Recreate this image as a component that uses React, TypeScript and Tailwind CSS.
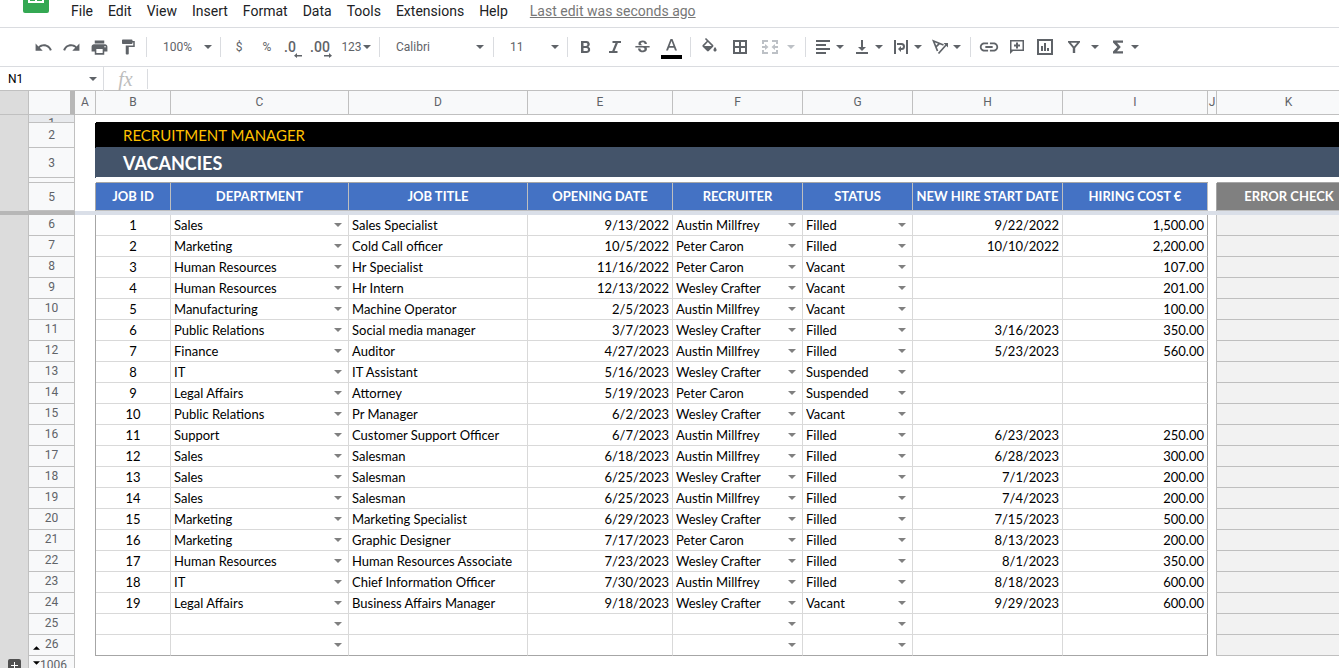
import type { ReactNode } from "react";
import { MdFormatPaint, MdLink, MdPrint, MdRedo, MdStrikethroughS, MdUndo } from "react-icons/md";

const menus = ["File", "Edit", "View", "Insert", "Format", "Data", "Tools", "Extensions", "Help"];

const departments = ["", "Sales", "Marketing", "Human Resources", "Manufacturing", "Public Relations", "Finance", "IT", "Legal Affairs", "Support"];
const recruiters = ["", "Austin Millfrey", "Peter Caron", "Wesley Crafter"];
const statuses = ["", "Filled", "Vacant", "Suspended"];

const vacancies = [
  ["1", "Sales", "Sales Specialist", "9/13/2022", "Austin Millfrey", "Filled", "9/22/2022", "1,500.00"],
  ["2", "Marketing", "Cold Call officer", "10/5/2022", "Peter Caron", "Filled", "10/10/2022", "2,200.00"],
  ["3", "Human Resources", "Hr Specialist", "11/16/2022", "Peter Caron", "Vacant", "", "107.00"],
  ["4", "Human Resources", "Hr Intern", "12/13/2022", "Wesley Crafter", "Vacant", "", "201.00"],
  ["5", "Manufacturing", "Machine Operator", "2/5/2023", "Austin Millfrey", "Vacant", "", "100.00"],
  ["6", "Public Relations", "Social media manager", "3/7/2023", "Wesley Crafter", "Filled", "3/16/2023", "350.00"],
  ["7", "Finance", "Auditor", "4/27/2023", "Austin Millfrey", "Filled", "5/23/2023", "560.00"],
  ["8", "IT", "IT Assistant", "5/16/2023", "Wesley Crafter", "Suspended", "", ""],
  ["9", "Legal Affairs", "Attorney", "5/19/2023", "Peter Caron", "Suspended", "", ""],
  ["10", "Public Relations", "Pr Manager", "6/2/2023", "Wesley Crafter", "Vacant", "", ""],
  ["11", "Support", "Customer Support Officer", "6/7/2023", "Austin Millfrey", "Filled", "6/23/2023", "250.00"],
  ["12", "Sales", "Salesman", "6/18/2023", "Austin Millfrey", "Filled", "6/28/2023", "300.00"],
  ["13", "Sales", "Salesman", "6/25/2023", "Wesley Crafter", "Filled", "7/1/2023", "200.00"],
  ["14", "Sales", "Salesman", "6/25/2023", "Austin Millfrey", "Filled", "7/4/2023", "200.00"],
  ["15", "Marketing", "Marketing Specialist", "6/29/2023", "Wesley Crafter", "Filled", "7/15/2023", "500.00"],
  ["16", "Marketing", "Graphic Designer", "7/17/2023", "Peter Caron", "Filled", "8/13/2023", "200.00"],
  ["17", "Human Resources", "Human Resources Associate", "7/23/2023", "Wesley Crafter", "Filled", "8/1/2023", "350.00"],
  ["18", "IT", "Chief Information Officer", "7/30/2023", "Austin Millfrey", "Filled", "8/18/2023", "600.00"],
  ["19", "Legal Affairs", "Business Affairs Manager", "9/18/2023", "Wesley Crafter", "Vacant", "9/29/2023", "600.00"],
  ["", "", "", "", "", "", "", ""],
  ["", "", "", "", "", "", "", ""],
];

const headings = ["JOB ID", "DEPARTMENT", "JOB TITLE", "OPENING DATE", "RECRUITER", "STATUS", "NEW HIRE START DATE", "HIRING COST €"];

function Caret({ className = "text-[#5f6368]" }: { className?: string }) {
  return (
    <svg viewBox="0 0 8 4" className={`w-2 h-1 shrink-0 ${className}`} fill="currentColor" aria-hidden="true">
      <path d="M0 0h8L4 4z" />
    </svg>
  );
}

function Icon({ children }: { children: ReactNode }) {
  return (
    <svg viewBox="0 0 18 18" className="size-[18px] shrink-0" fill="currentColor" aria-hidden="true">
      {children}
    </svg>
  );
}

function Tool({ label, className, children }: { label: string; className: string; children: ReactNode }) {
  return (
    <button type="button" aria-label={label} className={`h-6 flex items-center justify-center shrink-0 ${className}`}>
      {children}
    </button>
  );
}

function Divider() {
  return <div className="w-px h-5 bg-[#dadce0] shrink-0"></div>;
}

function Toolbar() {
  return (
    <div className="h-[39px] flex items-center pl-[29px] border-b border-[#dadce0] text-[#5f6368] text-xs overflow-hidden">
      <Tool label="Undo" className="w-7"><MdUndo size={19} /></Tool>
      <Tool label="Redo" className="w-7"><MdRedo size={19} /></Tool>
      <Tool label="Print" className="w-7"><MdPrint size={19} /></Tool>
      <Tool label="Paint format" className="w-[33px] pr-1"><MdFormatPaint size={18} /></Tool>
      <Divider />
      <Tool label="Zoom" className="w-[73px] gap-3 pl-2">100% <Caret /></Tool>
      <Divider />
      <Tool label="Format as currency" className="w-9">$</Tool>
      <Tool label="Format as percent" className="w-5">%</Tool>
      <Tool label="Decrease decimal places" className="w-8">
        <span className="text-sm font-medium">.0</span>
        <svg viewBox="0 0 8 5" className="w-2 h-[5px] -ml-0.5 mt-4" fill="currentColor"><path d="M3 0v2h5v1.500H3V5L0 2.700z" /></svg>
      </Tool>
      <Tool label="Increase decimal places" className="w-7 pr-1">
        <span className="text-sm font-medium">.00</span>
        <svg viewBox="0 0 8 5" className="w-2 h-[5px] -ml-1.5 mt-4" fill="currentColor"><path d="M5 0v2H0v1.500h5V5l3-2.300z" /></svg>
      </Tool>
      <Tool label="More formats" className="w-[42px] gap-px pr-1">123<Caret /></Tool>
      <Divider />
      <Tool label="Font" className="w-[113px] pl-4 pr-[9px]"><span className="flex-1 text-left">Calibri</span><Caret /></Tool>
      <Divider />
      <Tool label="Font size" className="w-[73px] pl-4 pr-2"><span className="flex-1 text-left">11</span><Caret /></Tool>
      <Divider />
      <Tool label="Bold" className="w-[35px]">
        <Icon><path fillRule="evenodd" d="M4 3h5.500a3.200 3.200 0 0 1 2 5.800A3.300 3.300 0 0 1 10 15H4zM6.500 5v2.900H9a1.450 1.450 0 0 0 0-2.900zM6.500 10v3h3a1.500 1.500 0 0 0 0-3z" /></Icon>
      </Tool>
      <Tool label="Italic" className="w-[23px]"><Icon><path d="M6.500 3H15v2h-3.100L8.600 13H11.500v2H3v-2h3.200L9.500 5h-3z" /></Icon></Tool>
      <Tool label="Strikethrough" className="w-[33px]"><MdStrikethroughS size={19} /></Tool>
      <Tool label="Text color" className="w-[25px]">
        <svg viewBox="0 0 21 20" className="w-[21px] h-5 mt-1"><path fill="#5f6368" fillRule="evenodd" d="M9.500 0h2l4.500 11.500h-2l-1-2.800H8l-1 2.800H5zM8.600 7h3.800l-1.900-5z" /><path fill="#000" d="M0 16h21v4H0z" /></svg>
      </Tool>
      <div className="w-1.5 shrink-0"></div>
      <Divider />
      <Tool label="Fill color" className="w-[37px]">
        <svg viewBox="0 0 24 24" className="size-[19px]" fill="currentColor"><path d="M16.560 8.940L7.620 0 6.210 1.410l2.380 2.380-5.150 5.150c-.59.59-.59 1.540 0 2.120l5.500 5.500c.29.29.68.44 1.060.44s.77-.15 1.060-.44l5.500-5.500c.59-.58.59-1.530 0-2.120zM5.210 10L10 5.210 14.790 10H5.210zM19 11.500s-2 2.170-2 3.500c0 1.100.9 2 2 2s2-.9 2-2c0-1.330-2-3.500-2-3.500z" /></svg>
      </Tool>
      <Tool label="Borders" className="w-6"><Icon><path fillRule="evenodd" d="M2 2h14v14H2zM4 4v4h4V4zM10 4v4h4V4zM4 10v4h4v-4zM10 10v4h4v-4z" /></Icon></Tool>
      <Tool label="Merge cells" className="w-[53px] gap-2 pr-0.5 text-[#bdc1c6]">
        <Icon><path d="M1 2h6v2H3v2H1zM11 2h6v4h-2V4h-4zM1 12h2v2h4v2H1zM15 12h2v4h-6v-2h4zM1 8h3V6l3.500 3L4 12v-2H1zM17 8h-3V6l-3.500 3 3.500 3v-2h3z" /></Icon>
        <Caret className="text-[#bdc1c6]" />
      </Tool>
      <Divider />
      <div className="flex px-[3px] shrink-0">
        <Tool label="Horizontal align" className="w-[39px] gap-1"><Icon><path d="M2 2h14v2H2zM2 6h10v2H2zM2 10h14v2H2zM2 14h10v2H2z" /></Icon><Caret /></Tool>
        <Tool label="Vertical align" className="w-[39px] gap-1"><Icon><path d="M8 2h2v7h3l-4 4-4-4h3zM3 14h12v2H3z" /></Icon><Caret /></Tool>
        <Tool label="Text wrapping" className="w-[39px] gap-1"><Icon><path d="M2 2h2v14H2zM14 2h2v14h-2zM5 5h4.500a3.500 3.500 0 0 1 0 7H9v2l-3-3 3-3v2h.5a1.500 1.500 0 0 0 0-3H5z" /></Icon><Caret /></Tool>
        <Tool label="Text rotation" className="w-[39px] gap-1">
          <Icon>
            <path fill="none" stroke="currentColor" strokeWidth="1.700" d="M6.500 13L2.500 3l10 4M4.700 9.200L8.600 5.300M7.500 15.500L15.500 6.500" />
            <path d="M12.500 5H17v4.500z" />
          </Icon>
          <Caret />
        </Tool>
      </div>
      <div className="w-0.5 shrink-0"></div>
      <Divider />
      <Tool label="Insert link" className="w-[35px]"><MdLink size={22} /></Tool>
      <Tool label="Insert comment" className="w-[21px]"><Icon><path fillRule="evenodd" d="M2 2h14v11H5l-3 3zM3.500 3.500v8h11v-8zM8 4.500h2v2h2v2h-2v2H8v-2H6v-2h2z" /></Icon></Tool>
      <Tool label="Insert chart" className="w-[35px]"><Icon><path fillRule="evenodd" d="M1 1h16v16H1zM3 3v12h12V3zM5 8h2v5H5zM8 5h2v8H8zM11 10h2v3h-2z" /></Icon></Tool>
      <Tool label="Filter" className="w-[42px] gap-2 pr-0.5"><Icon><path fillRule="evenodd" d="M3 3h12v1.200L10.200 10v5H7.800v-5L3 4.200zM5.800 4.700L9 8.600l3.200-3.900z" /></Icon><Caret /></Tool>
      <Tool label="Functions" className="w-[39px] gap-1"><Icon><path d="M4 2.500h10v2.300H8l3.800 4.200L8 13.200h6v2.300H4v-2L8.300 9 4 4.500z" /></Icon><Caret /></Tool>
    </div>
  );
}

function CellSelect({ value, options, label }: { value: string; options: string[]; label: string }) {
  return (
    <div className="flex items-center pl-[3px] pr-1.5 h-5">
      <select aria-label={label} defaultValue={value} className="appearance-none flex-1 min-w-0 h-5 p-0 bg-transparent">
        {options.map((item) => (
          <option key={item} value={item}>{item}</option>
        ))}
      </select>
      <Caret className="text-[#808080]" />
    </div>
  );
}

function RowHead({ n }: { n: string }) {
  return (
    <>
      <td className="p-0 bg-[#dcdcdc] border-r border-[#c0c0c0]"></td>
      <th scope="row" className="p-0 bg-[#f8f9fa] border-r border-b border-[#c0c0c0] font-normal font-[Roboto,sans-serif] text-xs text-[#5f6368]">{n}</th>
    </>
  );
}

function Sheet() {
  return (
    <div className="overflow-hidden">
      <table className="table-fixed border-separate border-spacing-0 w-[1361px] font-[Lato,sans-serif] text-[13px] leading-5 text-black">
        <colgroup>
          <col className="w-[29px]" />
          <col className="w-[46px]" />
          <col className="w-[21px]" />
          <col className="w-[75px]" />
          <col className="w-[178px]" />
          <col className="w-[179px]" />
          <col className="w-[145px]" />
          <col className="w-[130px]" />
          <col className="w-[110px]" />
          <col className="w-[150px]" />
          <col className="w-[145px]" />
          <col className="w-[9px]" />
          <col className="w-[144px]" />
        </colgroup>
        <thead>
          <tr className="h-6 font-[Roboto,sans-serif] text-xs text-[#5f6368]">
            <td className="p-0 bg-[#dcdcdc] border-r border-b border-[#c0c0c0]"></td>
            <td className="p-0 bg-[#f8f9fa] border-r-[5px] border-b border-r-[#b7b7b7] border-b-[#c0c0c0]"></td>
            {"ABCDEFGHIJK".split("").map((c) => (
              <th key={c} scope="col" className="p-0 pb-0.5 bg-[#f8f9fa] border-r border-b border-[#c0c0c0] font-normal">{c}</th>
            ))}
          </tr>
        </thead>
        <tbody>
          <tr className="h-2">
            <td className="p-0 bg-[#dcdcdc] border-r border-[#c0c0c0]"></td>
            <th scope="row" className="p-0 bg-[#e8eaed] border-r border-b border-[#c0c0c0] font-normal font-[Roboto,sans-serif] text-xs text-[#5f6368]">
              <div className="h-[7px] overflow-hidden leading-4">1</div>
            </th>
            <td className="p-0"></td>
            <td colSpan={10} className="p-0 border-b border-black"></td>
          </tr>
          <tr className="h-[25px]">
            <RowHead n="2" />
            <td className="p-0 border-r border-black"></td>
            <td colSpan={10} className="p-0 pl-[27px] bg-black border-b border-[#44546a] text-[#ffc000] text-[15px] leading-6">RECRUITMENT MANAGER</td>
          </tr>
          <tr className="h-[30px]">
            <RowHead n="3" />
            <td className="p-0 border-r border-[#44546a]"></td>
            <td colSpan={10} className="p-0 pl-[27px] bg-[#44546a] border-b border-white text-white text-lg font-bold">VACANCIES</td>
          </tr>
          <tr className="h-[5px]">
            <RowHead n="" />
            <td className="p-0"></td>
            <td colSpan={8} className="p-0 border-b border-[#a6a6a6]"></td>
            <td className="p-0"></td>
            <td className="p-0 border-b border-[#a6a6a6]"></td>
          </tr>
          <tr className="h-7 text-white whitespace-nowrap">
            <RowHead n="5" />
            <td className="p-0 border-r border-[#a6a6a6]"></td>
            {headings.map((item) => (
              <th key={item} className="p-0 pb-0.5 bg-[#4472c4] border-r border-b border-[#bfbfbf] font-bold">{item}</th>
            ))}
            <td className="p-0 border-r border-[#a6a6a6]"></td>
            <th className="p-0 pb-0.5 bg-[#808080] border-b border-[#bfbfbf] font-bold">ERROR CHECK</th>
          </tr>
          <tr className="h-1">
            <td colSpan={2} className="p-0 bg-[#b7b7b7]"></td>
            <td colSpan={11} className="p-0 bg-[#dadfe8]"></td>
          </tr>
          {vacancies.map(([id, department, title, opening, recruiter, status, start, cost], i) => {
            const row = String(i + 6);
            const line = i === vacancies.length - 1 ? "border-b-[#a6a6a6]" : "border-b-[#d9d9d9]";
            const cell = `p-0 border-r border-b border-r-[#d9d9d9] ${line}`;
            return (
              <tr key={row} className="h-[21px] whitespace-nowrap">
                <td className="p-0 bg-[#dcdcdc] border-r border-[#c0c0c0]"></td>
                <th scope="row" className="p-0 pb-0.5 bg-[#f8f9fa] border-r border-b border-[#c0c0c0] font-normal font-[Roboto,sans-serif] text-xs leading-4 text-[#5f6368]">
                  {row === "26" ? (
                    <div className="flex items-center gap-[5px] pl-1">
                      <svg viewBox="0 0 8 4" className="w-[7px] h-1 mt-2" aria-hidden="true"><path d="M0 4h8L4 0z" /></svg>
                      {row}
                    </div>
                  ) : row}
                </th>
                <td className="p-0 border-r border-[#a6a6a6]"></td>
                <td className={`${cell} text-center`}>{id}</td>
                <td className={cell}><CellSelect label={`Department, row ${row}`} value={department} options={departments} /></td>
                <td className={`${cell} pl-[3px]`}>{title}</td>
                <td className={`${cell} pr-[3px] text-right`}>{opening}</td>
                <td className={cell}><CellSelect label={`Recruiter, row ${row}`} value={recruiter} options={recruiters} /></td>
                <td className={cell}><CellSelect label={`Status, row ${row}`} value={status} options={statuses} /></td>
                <td className={`${cell} pr-[3px] text-right`}>{start}</td>
                <td className={`p-0 pr-[3px] border-r border-b border-r-[#a6a6a6] text-right ${line}`}>{cost}</td>
                <td className="p-0 border-r border-[#bfbfbf]"></td>
                <td className="p-0 bg-[#f2f2f2] border-b border-[#bfbfbf]"></td>
              </tr>
            );
          })}
          <tr className="h-[21px]">
            <td className="p-0 bg-[#dcdcdc] border-r border-[#c0c0c0] align-top">
              <button type="button" aria-label="Expand group" className="flex items-center justify-center size-[13px] ml-2 mt-[3px] rounded-xs bg-[#505050]">
                <svg viewBox="0 0 7 7" className="size-[7px]" fill="#fff"><path d="M3 0h1v3h3v1H4v3H3V4H0V3h3z" /></svg>
              </button>
            </td>
            <th scope="row" className="p-0 pb-0.5 bg-[#f8f9fa] border-r border-b border-[#c0c0c0] font-normal font-[Roboto,sans-serif] text-xs leading-4 text-[#5f6368]">
              <div className="flex items-center pl-1">
                <svg viewBox="0 0 8 4" className="w-[7px] h-1 mb-1" aria-hidden="true"><path d="M0 0h8L4 4z" /></svg>
                1006
              </div>
            </th>
            <td colSpan={11} className="p-0"></td>
          </tr>
        </tbody>
      </table>
    </div>
  );
}

export default function App() {
  return (
    <div className="w-full h-screen overflow-hidden bg-white font-[Roboto,sans-serif] text-[#202124]">
      <header className="h-7 flex border-b border-[#dadce0]">
        <svg viewBox="0 0 26 13" className="w-[26px] h-[13px] ml-[23px] shrink-0" aria-label="Sheets" role="img">
          <path fill="#34a853" d="M0 0h26v11a2 2 0 0 1-2 2H2a2 2 0 0 1-2-2z" />
          <path fill="#fff" fillRule="evenodd" d="M5 0h16v3H5zM7 0v1h5V0zM14 0v1h5V0z" />
        </svg>
        <nav className="flex items-center gap-px h-[22px] ml-[15px] text-sm">
          {menus.map((item) => (
            <button key={item} type="button" className="px-[7px]">{item}</button>
          ))}
          <a href="#history" className="ml-3.5 text-[#777] underline whitespace-nowrap">Last edit was seconds ago</a>
        </nav>
      </header>
      <Toolbar />
      <div className="h-6 flex items-center border-b border-[#c0c0c0]">
        <div className="flex items-center w-[104px] h-6 pl-2 pr-1.5 border-r border-[#dadce0]">
          <input aria-label="Name box" defaultValue="N1" className="flex-1 min-w-0 text-xs text-black outline-none" />
          <Caret />
        </div>
        <label htmlFor="formula" className="w-[43px] text-center font-['Liberation_Serif',serif] italic text-xl leading-5 text-[#bdbdbd]">fx</label>
        <Divider />
        <input id="formula" className="flex-1 px-2 text-xs outline-none" />
      </div>
      <Sheet />
    </div>
  );
}
